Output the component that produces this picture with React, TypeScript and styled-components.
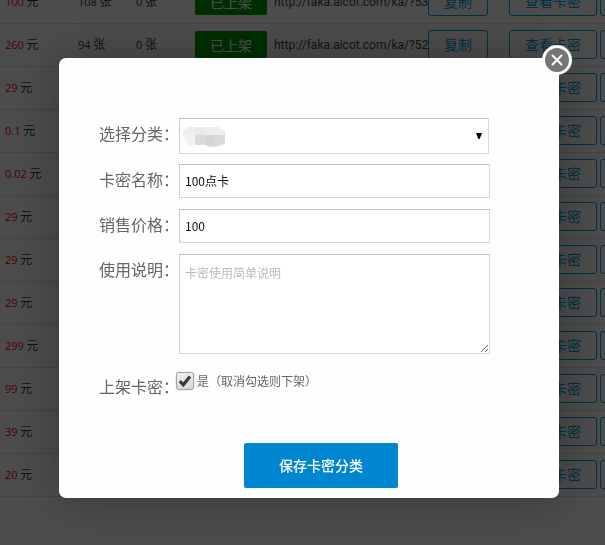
import React from "react";
import styled, { createGlobalStyle } from "styled-components";

const GlobalStyle = createGlobalStyle`
  *, *::before, *::after { box-sizing: border-box; }
  body {
    margin: 0;
    overflow: hidden;
    background: #fff;
    font-family: "Noto Sans CJK SC", "Noto Sans", sans-serif;
    font-size: 12px;
    color: #333;
  }
  button, input, select, textarea { font-family: inherit; }
`;

const Page = styled.main`
  height: 100vh;
  overflow: hidden;
`;

const CardTable = styled.table`
  width: 100%;
  min-width: 660px;
  margin-top: -19px;
  table-layout: fixed;
  border-collapse: separate;
  border-spacing: 0;
`;

const Col = styled.col<{ $width?: number }>`
  width: ${(p) => (p.$width ? `${p.$width}px` : "auto")};
`;

const Cell = styled.td<{ $indent?: number }>`
  height: 43px;
  padding: 0 0 1px ${(p) => p.$indent ?? 0}px;
  border-bottom: 1px solid #ddd;
  line-height: 18px;
  white-space: nowrap;
  vertical-align: middle;
`;

const Address = styled.span`
  color: #444;
  font-family: Roboto, sans-serif;
  font-size: 12px;
`;

const Digits = styled.span<{ $price?: boolean }>`
  font-family: "Open Sans", sans-serif;
  font-size: 11px;
  color: ${(p) => (p.$price ? "#f00" : "inherit")};
`;

const StatusButton = styled.button`
  display: block;
  width: 72px;
  height: 27px;
  padding: 0;
  border: 0;
  border-radius: 2px;
  background: #009a00;
  color: #fff;
  font-size: 14px;
  line-height: 26px;
`;

const OutlineButton = styled.button<{ $width: number }>`
  width: ${(p) => p.$width}px;
  height: 29px;
  margin-right: 3px;
  padding: 0 0 1px;
  border: 1px solid #00a0e9;
  border-radius: 3px;
  background: transparent;
  color: #00a0e9;
  font-size: 14px;
  line-height: 24px;
  vertical-align: middle;
`;

const Overlay = styled.div`
  position: fixed;
  inset: 0;
  display: flex;
  align-items: flex-start;
  padding: 58px 46px 47px 59px;
  background: rgba(0, 0, 0, 0.7);
`;

const Dialog = styled.section`
  position: relative;
  flex: 1;
  border-radius: 7px;
  background: #fefefe;
  box-shadow: 1px 1px 50px rgba(0, 0, 0, 0.3);
`;

const CloseButton = styled.button`
  position: absolute;
  top: -13px;
  right: -13px;
  display: grid;
  place-items: center;
  width: 30px;
  height: 30px;
  padding: 0;
  border: 3px solid #fff;
  border-radius: 50%;
  background: #757575;
`;

const Form = styled.form`
  display: flex;
  flex-direction: column;
  padding: 60px 69px 10px 40px;
`;

const Field = styled.div<{ $gap?: number }>`
  display: grid;
  grid-template-columns: 80px 1fr;
  align-items: start;
  margin-bottom: ${(p) => p.$gap ?? 11}px;
`;

const Label = styled.label`
  padding-top: 3px;
  color: #666;
  font-size: 16px;
  line-height: 24px;
  white-space: nowrap;
`;

const control = `
  display: block;
  width: 100%;
  margin: 0;
  padding: 0 5px 1px;
  border: 1px solid #d8d8d8;
  border-top-color: #c0c0c0;
  border-left-color: #c8c8c8;
  border-radius: 0;
  outline: 0;
  background: #fff;
  color: #111;
  font-size: 12px;
`;

const TextInput = styled.input`
  ${control}
  height: 34px;
`;

const TextArea = styled.textarea`
  ${control}
  height: 100px;
  padding-top: 9px;
  line-height: 18px;
  resize: both;
  &::placeholder { color: #bbb; opacity: 1; }
`;

const SelectBox = styled.div`
  position: relative;
  padding-right: 1px;
`;

const Select = styled.select`
  ${control}
  height: 36px;
  appearance: none;
`;

const Arrow = styled.svg`
  position: absolute;
  right: 8px;
  top: 15px;
  pointer-events: none;
`;

const Smudge = styled.svg`
  position: absolute;
  left: 4px;
  top: 9px;
  pointer-events: none;
`;

const CheckRow = styled.div`
  display: flex;
  align-items: center;
  gap: 2px;
  height: 20px;
  margin-left: -4px;
  color: #666;
`;

const CheckWrap = styled.span`
  display: grid;
  place-items: center;
  width: 20px;
  height: 20px;
  > * { grid-area: 1 / 1; }
  svg { pointer-events: none; }
`;

const CheckBox = styled.input`
  appearance: none;
  width: 18px;
  height: 18px;
  margin: 0;
  border: 1px solid #a2a2a2;
  border-radius: 3px;
  background: linear-gradient(#eee, #d9d9d9);
  box-shadow: 0 0 1px #888;
  &:not(:checked) + svg { visibility: hidden; }
`;

const CheckText = styled.label`
  line-height: 18px;
`;

const SaveButton = styled.button`
  width: 154px;
  height: 45px;
  margin-left: 145px;
  padding: 0 0 1px;
  border: 0;
  border-radius: 2px;
  background: #0085d0;
  color: #fff;
  font-size: 14px;
  font-weight: 500;
`;

type Card = { price: string; stock?: string; sold?: string; url?: string };

const cards: Card[] = [
  { price: "100", stock: "108", sold: "0", url: "http://faka.aicot.com/ka/?53" },
  { price: "260", stock: "94", sold: "0", url: "http://faka.aicot.com/ka/?52" },
  { price: "29" },
  { price: "0.1" },
  { price: "0.02" },
  { price: "29" },
  { price: "29" },
  { price: "29" },
  { price: "299" },
  { price: "99" },
  { price: "39" },
  { price: "20" },
];

function CardRow({ card }: { card: Card }) {
  return (
    <tr>
      <Cell $indent={5}>
        <Digits $price>{card.price}</Digits> 元
      </Cell>
      <Cell>{card.stock && <><Digits>{card.stock}</Digits> 张</>}</Cell>
      <Cell>{card.sold && <><Digits>{card.sold}</Digits> 张</>}</Cell>
      <Cell>{card.url && <StatusButton type="button">已上架</StatusButton>}</Cell>
      <Cell><Address>{card.url}</Address></Cell>
      <Cell>{card.url && <OutlineButton type="button" $width={60}>复制</OutlineButton>}</Cell>
      <Cell>
        <OutlineButton type="button" $width={88}>查看卡密</OutlineButton>
        <OutlineButton type="button" $width={60} aria-label="编辑" />
      </Cell>
    </tr>
  );
}

export default function App() {
  return (
    <>
      <GlobalStyle />
      <Page>
        <CardTable>
          <colgroup>
            <Col $width={78} />
            <Col $width={58} />
            <Col $width={59} />
            <Col $width={79} />
            <Col $width={154} />
            <Col $width={81} />
            <Col />
          </colgroup>
          <tbody>
            {cards.map((card, i) => <CardRow key={i} card={card} />)}
          </tbody>
        </CardTable>
      </Page>
      <Overlay>
        <Dialog role="dialog" aria-modal="true">
          <CloseButton type="button" aria-label="关闭">
            <svg width="12" height="12" viewBox="0 0 12 12" fill="none" stroke="#fff" strokeWidth="2" strokeLinecap="round">
              <path d="M1.5 1.5 10.5 10.5M10.5 1.5 1.5 10.5" />
            </svg>
          </CloseButton>
          <Form onSubmit={(e) => e.preventDefault()}>
            <Field $gap={10}>
              <Label htmlFor="category">选择分类：</Label>
              <SelectBox>
                <Select id="category" defaultValue="">
                  <option value="" />
                </Select>
                <Smudge width="43" height="22" viewBox="0 0 43 22">
                  <path d="M1 3 5 0H35L42 4V9H0V5Z" fill="#ededed" />
                  <path d="M0 7H12V19H6L3 15Z" fill="#f2f2f2" />
                  <path d="M12 1H23V8H12Z" fill="#e9e9e9" />
                  <path d="M12 8H42V17L38 18 33 20H27L22 18H12Z" fill="#dadada" />
                  <path d="M23 8H32V18H23Z" fill="#d5d5d5" />
                </Smudge>
                <Arrow width="6" height="6" viewBox="0 0 6 6">
                  <path d="M0 0H6L3.6 6H2.4Z" fill="#000" />
                </Arrow>
              </SelectBox>
            </Field>
            <Field>
              <Label htmlFor="name">卡密名称：</Label>
              <TextInput id="name" defaultValue="100点卡" />
            </Field>
            <Field>
              <Label htmlFor="price">销售价格：</Label>
              <TextInput id="price" defaultValue="100" />
            </Field>
            <Field $gap={17}>
              <Label htmlFor="usage">使用说明：</Label>
              <TextArea id="usage" placeholder="卡密使用简单说明" />
            </Field>
            <Field $gap={45}>
              <Label htmlFor="listed">上架卡密：</Label>
              <CheckRow>
                <CheckWrap>
                  <CheckBox type="checkbox" id="listed" defaultChecked />
                  <svg width="14" height="14" viewBox="0 0 14 14" fill="none" stroke="#3c3c3c" strokeWidth="3.2">
                    <path d="M1.8 7.2 5.3 10.8 12 2.4" />
                  </svg>
                </CheckWrap>
                <CheckText htmlFor="listed">是（取消勾选则下架）</CheckText>
              </CheckRow>
            </Field>
            <SaveButton type="submit">保存卡密分类</SaveButton>
          </Form>
        </Dialog>
      </Overlay>
    </>
  );
}
